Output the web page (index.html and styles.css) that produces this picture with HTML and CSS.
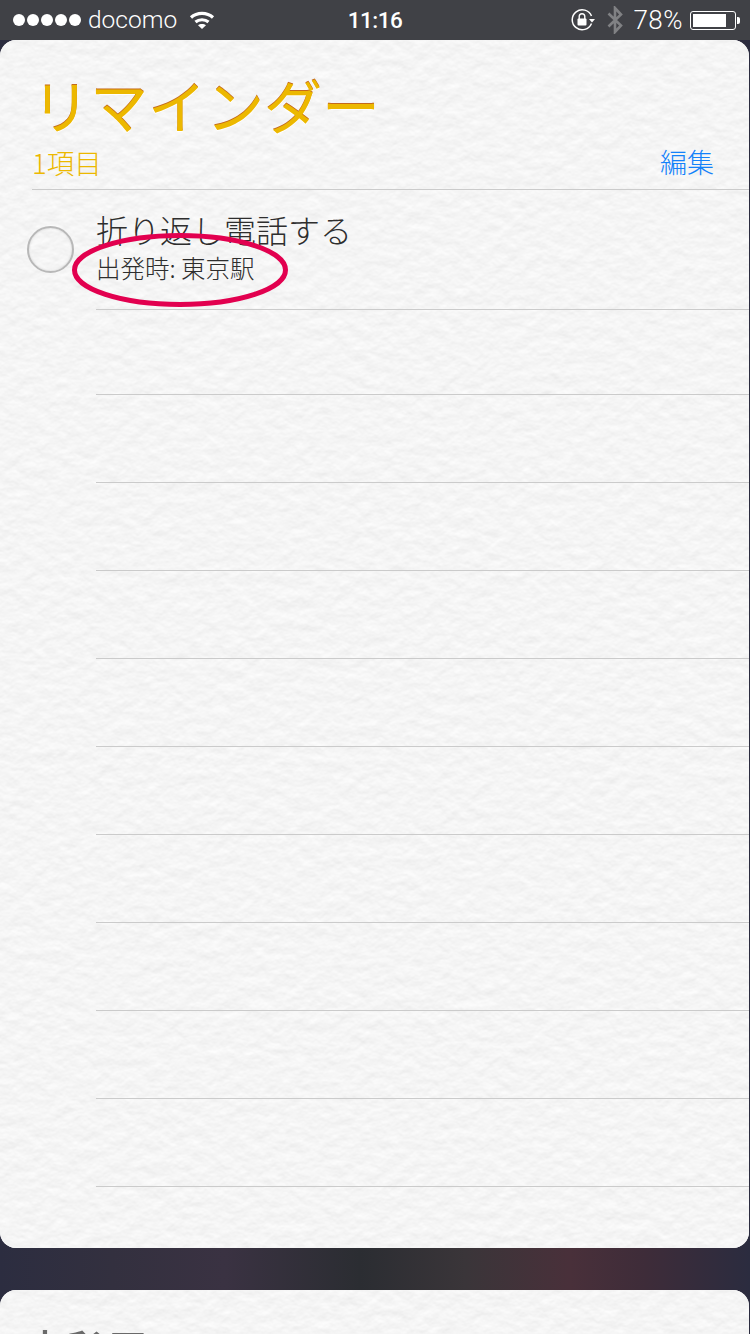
FILE: index.html
```html
<!DOCTYPE html>
<html lang="ja">
<head>
    <meta charset="UTF-8">
    <meta name="viewport" content="width=device-width, initial-scale=1.0">
    <title>リマインダー</title>
    <link rel="stylesheet" href="styles.css">
</head>
<body>
    <svg class="defs" width="0" height="0">
        <filter id="paper" x="0" y="0" width="100%" height="100%" color-interpolation-filters="sRGB">
            <feTurbulence type="fractalNoise" baseFrequency="0.075 0.085" numOctaves="4" seed="7"/>
            <feDiffuseLighting surfaceScale="0.3" diffuseConstant="1.09" lighting-color="#f6f6f6">
                <feDistantLight azimuth="90" elevation="66"/>
            </feDiffuseLighting>
        </filter>
    </svg>

    <div class="status-bar">
        <div class="status-left">
            <div class="signal"><i></i><i></i><i></i><i></i><i></i></div>
            <span class="carrier">docomo</span>
            <svg class="wifi" width="26" height="20" viewBox="0 0 26 20">
                <path d="M2 7.5C8 2 18 2 24 7.5" fill="none" stroke="#fff" stroke-width="3.2"/>
                <path d="M6.5 12C10 9 16 9 19.5 12" fill="none" stroke="#fff" stroke-width="3.2"/>
                <path d="M9 15.2C11 13.7 15 13.7 17 15.2L13 19Z" fill="#fff"/>
            </svg>
        </div>
        <div class="time">11:16</div>
        <div class="status-right">
            <svg class="rotation" width="24" height="24" viewBox="0 0 24 24">
                <path d="M20.5 15.5A10 10 0 1 1 20.5 8" fill="none" stroke="#fff" stroke-width="1.5"/>
                <path d="M18 11H24L21 14.5Z" fill="#fff"/>
                <rect x="6.5" y="10.5" width="9" height="7" rx="1" fill="#fff"/>
                <path d="M8.2 11V8.6a2.8 2.8 0 0 1 5.6 0V11" fill="none" stroke="#fff" stroke-width="1.4"/>
            </svg>
            <svg class="bluetooth" width="16" height="28" viewBox="0 0 16 28">
                <path d="M1.5 7.5L14 19.5L8 26V2L14 8.5L1.5 20.5" fill="none" stroke="#808184" stroke-width="2.6"/>
            </svg>
            <span class="percent">78%</span>
            <div class="battery">
                <div class="battery-body"><div class="battery-level"></div></div>
                <div class="battery-tip"></div>
            </div>
        </div>
    </div>

    <section class="card">
        <svg class="paper"><rect width="100%" height="100%" filter="url(#paper)"/></svg>
        <header class="card-head">
            <h1 class="card-title title-yellow">リマインダー</h1>
            <div class="card-meta">
                <span class="count">1項目</span>
                <span class="edit">編集</span>
            </div>
        </header>
        <div class="item">
            <div class="check"></div>
            <div class="item-body">
                <div class="item-title">折り返し電話する</div>
                <div class="item-sub">出発時: 東京駅</div>
            </div>
            <svg class="mark" width="222" height="80" viewBox="0 0 222 80">
                <ellipse cx="110" cy="40" rx="105.5" ry="34.5" fill="none" stroke="#e2004f" stroke-width="5"/>
            </svg>
        </div>
        <div class="row row-short"></div>
        <div class="row"></div>
        <div class="row"></div>
        <div class="row"></div>
        <div class="row"></div>
        <div class="row"></div>
        <div class="row"></div>
        <div class="row"></div>
        <div class="row"></div>
        <div class="row"></div>
    </section>

    <section class="card card-next">
        <svg class="paper"><rect width="100%" height="100%" filter="url(#paper)"/></svg>
        <header class="card-head">
            <h1 class="card-title title-gray">折返リスト</h1>
        </header>
    </section>
</body>
</html>
```

FILE: styles.css
```css
html, body {
    margin: 0;
    padding: 0;
}
body {
    width: 750px;
    height: 1334px;
    overflow: hidden;
    background: linear-gradient(90deg, #2c2d40 0%, #33303f 15%, #3a3242 30%, #2b2d32 48%, #3a3539 62%, #49303a 76%, #3e2c39 86%, #2b2c3f 100%);
    font-family: "Noto Sans CJK JP", "Noto Sans", sans-serif;
}
.defs {
    display: block;
    height: 0;
}

/* status bar */
.status-bar {
    height: 40px;
    background-color: #404146;
    color: #fff;
    display: grid;
    grid-template-columns: 1fr auto 1fr;
    align-items: center;
    font-family: Roboto, "Liberation Sans", sans-serif;
}
.status-left {
    display: flex;
    align-items: center;
    padding-left: 13px;
}
.signal {
    display: flex;
    gap: 2px;
}
.signal i {
    display: block;
    width: 12px;
    height: 12px;
    border-radius: 50%;
    background-color: #fff;
}
.carrier {
    margin-left: 7px;
    font-size: 24.5px;
    font-weight: 300;
    line-height: 40px;
}
.wifi {
    margin-left: 12px;
}
.time {
    font-size: 22.5px;
    font-weight: 500;
    letter-spacing: -0.5px;
}
.status-right {
    display: flex;
    align-items: center;
    justify-content: flex-end;
    padding-right: 10px;
}
.rotation {
    margin-right: 2px;
}
.bluetooth {
    margin-left: 10px;
}
.percent {
    margin-left: 10px;
    font-size: 26px;
    font-weight: 300;
    letter-spacing: 0.5px;
}
.battery {
    display: flex;
    align-items: center;
    margin-left: 7px;
}
.battery-body {
    box-sizing: border-box;
    width: 46px;
    height: 19px;
    padding: 2px;
    border: 1px solid #fff;
    border-radius: 3px;
}
.battery-level {
    width: 33px;
    height: 13px;
    background-color: #fff;
}
.battery-tip {
    width: 3px;
    height: 7px;
    margin-left: 1px;
    background-color: #fff;
    border-radius: 0 2px 2px 0;
}

/* cards */
.card {
    position: relative;
    width: 749px;
    padding-bottom: 61px;
    border-radius: 16px;
    overflow: hidden;
    background-color: #f5f5f5;
}
.card-next {
    height: 44px;
    margin-top: 42px;
    padding-bottom: 0;
    border-radius: 16px 16px 0 0;
}
.paper {
    position: absolute;
    left: 0;
    top: 0;
    width: 100%;
    height: 100%;
}
.card-head {
    position: relative;
    margin-left: 32px;
    padding: 32px 35px 0 0;
}
.card-title {
    margin: 0;
    font-size: 58px;
    font-weight: 400;
    line-height: 64px;
}
.title-yellow {
    color: #ecb800;
    text-shadow: 0 -1px 0 #c4691c, 0 1px 0 #fff;
}
.title-gray {
    color: #6a6a6a;
    text-shadow: 0 1px 0 #fff;
}
.card-meta {
    display: flex;
    justify-content: space-between;
    margin-top: 10px;
    padding-bottom: 11px;
    font-size: 27px;
    font-weight: 400;
    line-height: 32px;
}
.title-yellow + .card-meta {
    margin-right: -35px;
    padding-right: 35px;
    border-bottom: 1px solid #cbcbcb;
}
.count {
    color: #ecb800;
    font-size: 27.5px;
    font-weight: 300;
}
.edit {
    color: #1482fa;
    font-weight: 300;
}

/* reminder rows */
.item {
    position: relative;
    display: flex;
}
.check {
    box-sizing: border-box;
    flex: none;
    width: 47px;
    height: 47px;
    margin: 36px 22px 0 27px;
    border: 2px solid #b8b8b8;
    border-radius: 50%;
    box-shadow: inset 0 0 2px #ccc;
}
.item-body {
    flex: 1;
    padding: 19px 0 23px;
    border-bottom: 1px solid #cbcbcb;
}
.item-title {
    color: #2e2e2e;
    font-size: 32px;
    font-weight: 300;
    line-height: 40px;
}
.item-sub {
    color: #2e2e2e;
    font-size: 24.5px;
    font-weight: 300;
    line-height: 37px;
}
.mark {
    position: absolute;
    left: 70px;
    top: 40px;
}
.row {
    position: relative;
    box-sizing: border-box;
    height: 88px;
    margin-left: 96px;
    border-bottom: 1px solid #cbcbcb;
}
.row-short {
    height: 85px;
}
```
